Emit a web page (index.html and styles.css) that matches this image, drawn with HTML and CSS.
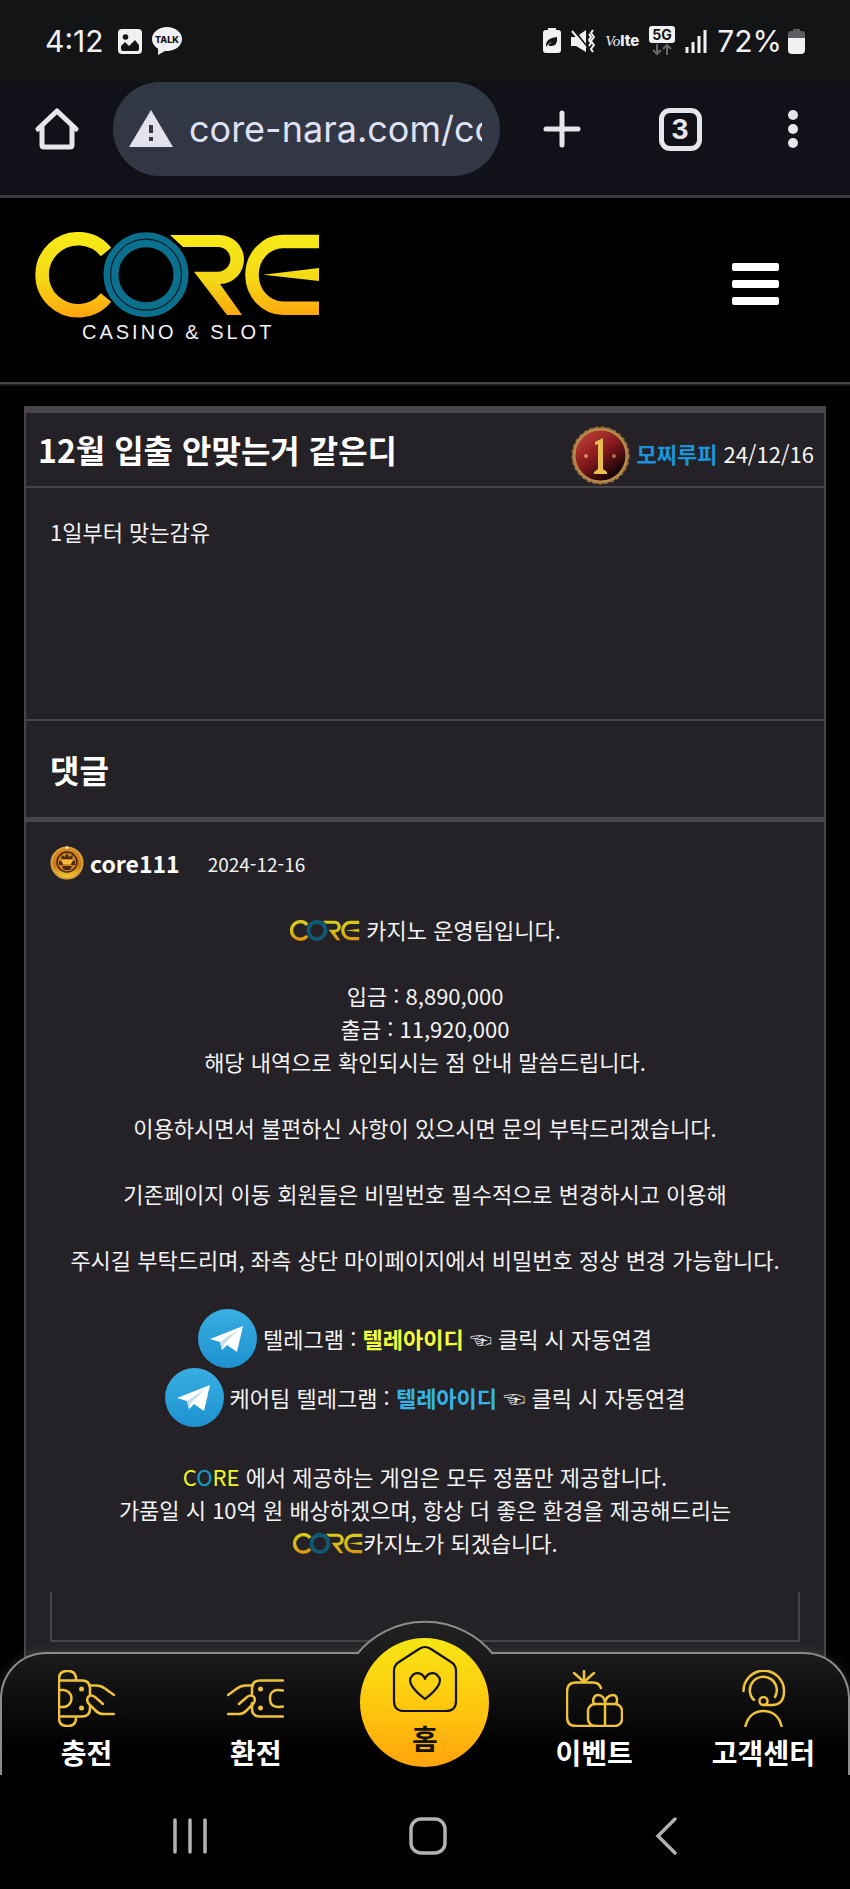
FILE: index.html
```html
<!DOCTYPE html>
<html lang="ko">
<head>
  <meta charset="UTF-8">
  <meta name="viewport" content="width=device-width, initial-scale=1.0">
  <title>CORE 게시판</title>
  <link rel="stylesheet" href="styles.css">
</head>
<body>

  <!-- shared shapes -->
  <svg class="defs" width="0" height="0" aria-hidden="true">
    <defs>
      <linearGradient id="gold" gradientUnits="userSpaceOnUse" x1="0" y1="0" x2="0" y2="84">
        <stop offset="0" stop-color="#f8ea18"/>
        <stop offset="0.55" stop-color="#f4d916"/>
        <stop offset="1" stop-color="#ffa50f"/>
      </linearGradient>
      <linearGradient id="sky" x1="0" y1="0" x2="0" y2="1">
        <stop offset="0" stop-color="#38aee2"/>
        <stop offset="1" stop-color="#1e92d0"/>
      </linearGradient>
      <linearGradient id="ruby" x1="0.2" y1="0.1" x2="0.75" y2="0.85">
        <stop offset="0" stop-color="#b83a33"/>
        <stop offset="0.5" stop-color="#84181b"/>
        <stop offset="1" stop-color="#160508"/>
      </linearGradient>
      <linearGradient id="coin" x1="0" y1="0" x2="0" y2="1">
        <stop offset="0" stop-color="#d98a25"/>
        <stop offset="0.6" stop-color="#c97a1c"/>
        <stop offset="1" stop-color="#f4d63c"/>
      </linearGradient>
      <symbol id="brand" viewBox="0 -1 284 86">
        <g fill="none" stroke="url(#gold)" stroke-width="13.5">
          <path d="M71 19A36 36 0 1 0 71 64.500"/>
          <path d="M284 8.500H248A31 33.300 0 0 0 248 75.200H284"/>
        </g>
        <path fill="url(#gold)" d="M135 2H184A24.500 24.500 0 0 1 185 51L207 82H192L159 38.700H183A12.300 12.300 0 0 0 183 14H148z"/>
        <path fill="url(#gold)" d="M228 41.700L284 35V48z"/>
        <circle cx="111" cy="41.700" r="35" fill="none" stroke="#0b6f8e" stroke-width="15"/>
        <circle cx="111" cy="41.700" r="35.500" fill="none" stroke="#041a24" stroke-width="1.200"/>
      </symbol>
      <symbol id="telegram" viewBox="0 0 59 59">
        <circle cx="29.500" cy="29.500" r="29.500" fill="url(#sky)"/>
        <path fill="#fff" d="M12 30L45 17L39 43L29 36L24 41L22 33z"/>
        <path fill="#c5dcec" d="M22 33L40 21L26 35L24 41z"/>
      </symbol>
    </defs>
  </svg>

  <!-- phone status bar -->
  <div class="status">
    <span class="status-text">4:12</span>
    <svg class="s-photo" width="24" height="25" viewBox="0 0 24 25">
      <rect width="24" height="25" rx="4" fill="#f1f1f3"/>
      <circle cx="7.500" cy="8" r="2.800" fill="#131416"/>
      <path fill="#131416" d="M3 19V17L7 13L11 17L17 11L21 16V20Q21 22 19 22H5Q3 22 3 19z"/>
    </svg>
    <svg class="s-talk" width="30" height="28" viewBox="0 0 30 28">
      <path fill="#f1f1f3" d="M15 0C23 0 30 5 30 12S23 24 15 24L13 24L6 28V21.500Q0 18 0 12C0 5 7 0 15 0z"/>
      <text x="15" y="16" text-anchor="middle" font-family="Inter, sans-serif" font-size="9" font-weight="800" fill="#131416">TALK</text>
    </svg>
    <div class="status-right">
      <svg width="18" height="26" viewBox="0 0 18 26">
        <path fill="#f1f1f3" d="M5 0H13V2H15Q18 2 18 5V22Q18 25 15 25H3Q0 25 0 22V5Q0 2 3 2H5z"/>
        <path fill="#131416" d="M3 19Q2 10 14 9Q15 18 8 18Q6 18 5 17L9 14Q5 15 3 19z"/>
      </svg>
      <svg width="24" height="24" viewBox="0 0 24 24">
        <path fill="#f1f1f3" d="M0 8H5L15 1V23L5 17H0z"/>
        <path stroke="#131416" stroke-width="2" d="M3 1L17 19"/>
        <path stroke="#f1f1f3" stroke-width="2" d="M1 2L15 19"/>
        <path fill="none" stroke="#f1f1f3" stroke-width="2" d="M18 5L20 8L18 11L20 14L18 17M22 1L20 4L23 8L20 12L23 16L20 20L22 23"/>
      </svg>
      <span class="volte"><i>Vo</i>lte</span>
      <svg width="26" height="30" viewBox="0 0 26 30">
        <rect width="26" height="17" rx="3" fill="#f1f1f3"/>
        <text x="13" y="14" text-anchor="middle" font-family="Inter, sans-serif" font-size="14" font-weight="700" fill="#131416">5G</text>
        <path fill="none" stroke="#66676b" stroke-width="2" d="M8 18V28M4 24L8 28L12 24M18 29V19M14 23L18 19L22 23"/>
      </svg>
      <svg width="22" height="24" viewBox="0 0 22 24">
        <path stroke="#f1f1f3" stroke-width="3" d="M2 18V24M8 13V24M14 7V24"/>
        <path stroke="#f1f1f3" stroke-width="3" d="M20 1V24"/>
      </svg>
      <span class="status-text">72%</span>
      <svg class="s-battery" width="17" height="25" viewBox="0 0 17 25">
        <path fill="#5d5e61" d="M5 0H12V2H14Q17 2 17 5V10H0V5Q0 2 3 2H5z"/>
        <path fill="#f1f1f3" d="M0 9H17V21Q17 25 13 25H4Q0 25 0 21z"/>
      </svg>
    </div>
  </div>

  <!-- browser bar -->
  <div class="browser">
    <button class="browser-btn" aria-label="Home">
      <svg width="44" height="44" viewBox="0 0 44 44" fill="none" stroke="#e6e5ea" stroke-width="5" stroke-linejoin="round" stroke-linecap="round">
        <path d="M3 22L22 4L41 22"/>
        <path d="M7 19V38Q7 40 9 40H35Q37 40 37 38V19"/>
      </svg>
    </button>
    <div class="address">
      <svg width="44" height="38" viewBox="0 0 44 38">
        <path fill="#e2e2ee" d="M22 0L44 37H0z"/>
        <path fill="#333745" d="M20 15H24V23H20zM20 27H24V31H20z"/>
      </svg>
      <input type="text" value="core-nara.com/cc" aria-label="Address">
    </div>
    <button class="browser-btn" aria-label="New tab">
      <svg width="38" height="38" viewBox="0 0 38 38" stroke="#e6e5ea" stroke-width="5" stroke-linecap="round">
        <path d="M19 3V35M3 19H35"/>
      </svg>
    </button>
    <button class="browser-btn" aria-label="Tabs"><span class="tab-count">3</span></button>
    <button class="browser-btn" aria-label="Menu">
      <svg width="10" height="38" viewBox="0 0 10 38" fill="#e6e5ea">
        <circle cx="5" cy="5" r="5"/><circle cx="5" cy="19" r="5"/><circle cx="5" cy="33" r="5"/>
      </svg>
    </button>
  </div>

  <div class="site">
    <header>
      <a class="logo" href="/" aria-label="CORE">
        <svg width="284" height="86"><use href="#brand"/></svg>
        <span>CASINO &amp; SLOT</span>
      </a>
      <button class="menu" aria-label="Menu"><i></i><i></i><i></i></button>
    </header>

    <main class="board">
      <div class="post-head">
        <h1>12월 입출 안맞는거 같은디</h1>
        <div class="post-info">
          <svg class="medal" width="59" height="59" viewBox="0 0 59 59">
            <circle cx="29.500" cy="29.500" r="26.500" fill="url(#ruby)" stroke="#b98a4a" stroke-width="3"/>
            <circle cx="29.500" cy="29.500" r="28" fill="none" stroke="#9a7440" stroke-width="2" stroke-dasharray="4 2"/>
            <path fill="#e9be4e" d="M24 16L32 12V43L36 46V48H23V46L27 43V18L24 19z"/>
            <circle cx="15" cy="30" r="2" fill="#d98a5a"/>
            <circle cx="43" cy="30" r="2" fill="#a8763a"/>
          </svg>
          <strong>모찌루피</strong>
          <span>24/12/16</span>
        </div>
      </div>

      <div class="post-body">1일부터 맞는감유</div>

      <h2>댓글</h2>

      <!-- comment -->
      <div class="comment">
        <div class="comment-info">
          <svg width="34" height="34" viewBox="0 0 34 34">
            <circle cx="17" cy="17" r="15.500" fill="url(#coin)" stroke="#d9a03a" stroke-width="2"/>
            <circle cx="17" cy="1.500" r="1.500" fill="#f0dc9a"/>
            <circle cx="17" cy="16" r="10" fill="#c98420" stroke="#4a270c" stroke-width="1.500"/>
            <path fill="#4a270c" d="M11 9L15 11L17 7L19 11L23 9L22 13H12zM9 15H13V19H9zM21 15H25V19H21zM12 20H22L20 24H14z"/>
            <path fill="#f0bd3c" d="M11 14H23L21 18H13z"/>
          </svg>
          <strong>core111</strong>
          <span>2024-12-16</span>
        </div>

        <div class="comment-text">
          <p><svg class="brand-sm" width="71" height="21"><use href="#brand"/></svg> 카지노 운영팀입니다.</p>
          <p>입금 : 8,890,000<br>
            출금 : 11,920,000<br>
            해당 내역으로 확인되시는 점 안내 말씀드립니다.</p>
          <p>이용하시면서 불편하신 사항이 있으시면 문의 부탁드리겠습니다.</p>
          <p>기존페이지 이동 회원들은 비밀번호 필수적으로 변경하시고 이용해</p>
          <p>주시길 부탁드리며, 좌측 상단 마이페이지에서 비밀번호 정상 변경 가능합니다.</p>
          <div class="contacts">
            <div class="contact">
              <svg width="59" height="59"><use href="#telegram"/></svg>
              <span>텔레그램 : <a class="yellow" href="#">텔레아이디</a> ☜ 클릭 시 자동연결</span>
            </div>
            <div class="contact">
              <svg width="59" height="59"><use href="#telegram"/></svg>
              <span>케어팀 텔레그램 : <a class="blue" href="#">텔레아이디</a> ☜ 클릭 시 자동연결</span>
            </div>
          </div>
          <p><span class="c-yellow">C</span><span class="c-blue">O</span><span class="c-yellow">RE</span> 에서 제공하는 게임은 모두 정품만 제공합니다.<br>
            가품일 시 10억 원 배상하겠으며, 항상 더 좋은 환경을 제공해드리는<br>
            <svg class="brand-sm" width="71" height="21"><use href="#brand"/></svg>카지노가 되겠습니다.</p>
        </div>
        <div class="comment-end"></div>
      </div>
    </main>

    <!-- bottom tabs -->
    <nav class="tabs">
      <svg class="hump" width="136" height="36" viewBox="0 0 136 36">
        <defs>
          <linearGradient id="humpFill" x1="0" y1="0" x2="0" y2="1">
            <stop offset="0" stop-color="#232223"/>
            <stop offset="1" stop-color="#1b1b1b"/>
          </linearGradient>
        </defs>
        <path fill="url(#humpFill)" d="M0 36V33A88 88 0 0 1 136 33V36z"/>
        <path fill="none" stroke="#8d8d8b" stroke-width="2" d="M0 34A88 88 0 0 1 136 34"/>
      </svg>
      <a href="#">
        <svg width="57" height="57" viewBox="0 0 57 57" class="line">
          <path d="M18 10V9Q18 1 10 1H9Q1 1 1 9V48Q1 56 9 56H10Q18 56 18 48V47"/>
          <path d="M1 10.500H24Q32 10.500 32 18.500V38.500Q32 46.500 24 46.500H1"/>
          <path d="M1 20H5A8.500 8.500 0 0 1 5 37H1"/>
          <path d="M31 15.500H38Q43 15.500 47 18.500L56 25"/>
          <path class="mask" d="M45 34L37 27Q33 24 30 27Q28 31 31 34L38 41"/>
          <path d="M38 41Q41 44 45 44H56"/>
          <circle class="dot" cx="23.500" cy="19" r="2.500"/><circle class="dot" cx="23.500" cy="38" r="2.500"/>
        </svg>
        <span>충전</span>
      </a>
      <a href="#">
        <svg width="57" height="57" viewBox="0 0 57 57" class="line">
          <path d="M56 10.500H33Q25 10.500 25 18.500V24M25 33V38.500Q25 46.500 33 46.500H56"/>
          <path d="M56 20.500Q43 18 43 28.500T56 36.500"/>
          <path d="M26 15.500H19Q14 15.500 10 18.500L1 25"/>
          <path d="M12 34L20 27Q24 24 27 27Q29 31 26 34L19 41Q16 44 12 44H1"/>
          <circle class="dot" cx="33.500" cy="19" r="2.500"/><circle class="dot" cx="33.500" cy="38" r="2.500"/>
        </svg>
        <span>환전</span>
      </a>
      <a href="#" class="home">
        <svg width="66" height="68" viewBox="0 0 66 68" fill="none" stroke="#15120a" stroke-width="2.200" stroke-linejoin="round">
          <path d="M2 26Q2 20 7 17L27 4Q33 0 39 4L59 17Q64 20 64 26V56Q64 66 54 66H12Q2 66 2 56z"/>
          <path d="M33 54C20 44 15 36 20 31C24 26 31 28 33 34C35 28 42 26 46 31C51 36 46 44 33 54z"/>
        </svg>
        <span>홈</span>
      </a>
      <a href="#">
        <svg width="57" height="57" viewBox="0 0 57 57" class="line">
          <path d="M18 12V1M17 11L8 3M19 11L28 3"/>
          <path d="M35 18Q33 12.500 27 12.500H10Q1 12.500 1 21.500V47Q1 56 10 56H30"/>
          <rect x="22" y="34" width="34" height="22" rx="7"/>
          <path d="M39 56V34C39 28 36 25 32 25S26 30 28 34M39 34C39 28 43 25 47 25S52 30 50 34"/>
        </svg>
        <span>이벤트</span>
      </a>
      <a href="#">
        <svg width="57" height="57" viewBox="0 0 57 57" class="line">
          <path d="M8.500 21A20 20 0 0 1 49 21Q49 35 37 35H30"/>
          <path d="M19 30A13.500 13.500 0 1 1 40 27"/>
          <circle cx="28.500" cy="31" r="4"/>
          <path d="M10.500 56C13 46 20 41 28.500 41S44 46 46.500 56"/>
        </svg>
        <span>고객센터</span>
      </a>
    </nav>
  </div>

  <!-- android buttons -->
  <div class="sysnav">
    <button aria-label="Recent">
      <svg width="34" height="38" viewBox="0 0 34 38" stroke="#b3b1b3" stroke-width="3.500" stroke-linecap="round">
        <path d="M2 3V35M17 3V35M32 3V35"/>
      </svg>
    </button>
    <button aria-label="Home">
      <svg width="38" height="38" viewBox="0 0 38 38" fill="none" stroke="#b3b1b3" stroke-width="3.500">
        <rect x="2" y="2" width="34" height="34" rx="10"/>
      </svg>
    </button>
    <button aria-label="Back">
      <svg width="22" height="38" viewBox="0 0 22 38" fill="none" stroke="#b3b1b3" stroke-width="3.500" stroke-linecap="round">
        <path d="M20 2L3 19L20 36"/>
      </svg>
    </button>
  </div>

</body>
</html>
```

FILE: styles.css
```css
* {
  box-sizing: border-box;
}

body {
  margin: 0;
  min-height: 100vh;
  display: flex;
  flex-direction: column;
  background-color: #000;
  color: #f3f2f4;
  font-family: "Noto Sans CJK KR", "DejaVu Sans", sans-serif;
  font-size: 22px;
  line-height: 33px;
}

svg {
  display: block;
  flex: none;
}

.defs {
  position: absolute;
}

button {
  background: none;
  border: none;
  padding: 0;
  cursor: pointer;
}

a {
  color: inherit;
  text-decoration: none;
}

/* status bar */
.status {
  display: flex;
  align-items: center;
  height: 82px;
  padding: 0 45px;
  background-color: #131416;
}

.status-text {
  font-family: Inter, sans-serif;
  font-size: 30px;
  color: #f1f1f3;
}

.s-photo {
  margin-left: 14px;
}

.s-talk {
  margin-left: 10px;
}

.status-right {
  display: flex;
  align-items: center;
  gap: 10px;
  margin-left: auto;
}

.volte {
  font-family: Inter, sans-serif;
  font-size: 15px;
  font-weight: 800;
  color: #f1f1f3;
}

.volte i {
  font-family: "Liberation Serif", serif;
  font-weight: 400;
}

.s-battery {
  margin-left: -4px;
}

/* browser bar */
.browser {
  display: grid;
  grid-template-columns: 113px minmax(0, 1fr) 124px 112px 114px;
  align-items: center;
  padding-bottom: 19px;
  background-color: #111219;
  border-bottom: 3px solid #3b3a3f;
}

.browser-btn {
  display: flex;
  justify-content: center;
}

.address {
  display: flex;
  align-items: center;
  gap: 16px;
  height: 94px;
  padding: 0 18px 0 16px;
  border-radius: 47px;
  background: linear-gradient(#303943, #333745 50%);
}

.address input {
  flex: 1;
  min-width: 0;
  padding: 0;
  border: none;
  outline: none;
  background: none;
  color: #dfe0f2;
  font-family: Inter, sans-serif;
  font-size: 36px;
}

.tab-count {
  width: 43px;
  height: 43px;
  border: 5px solid #e6e5ea;
  border-radius: 11px;
  color: #e6e5ea;
  font-family: Inter, sans-serif;
  font-size: 27px;
  font-weight: 700;
  line-height: 33px;
}

/* site */
.site {
  position: relative;
  flex: 1;
  display: flex;
  flex-direction: column;
  overflow: hidden;
}

header {
  display: flex;
  align-items: center;
  justify-content: space-between;
  padding: 34px 71px 39px 35px;
  border-bottom: 2px solid #474549;
  box-shadow: 0 2px 0 #1d1c1f;
}

.logo span {
  display: block;
  margin-top: 3px;
  padding-left: 47px;
  font-family: "Liberation Sans", sans-serif;
  font-size: 20px;
  line-height: 22px;
  letter-spacing: 3px;
}

.menu {
  display: flex;
  flex-direction: column;
  gap: 9px;
  margin-bottom: 8px;
}

.menu i {
  width: 47px;
  height: 8px;
  border-radius: 2px;
  background-color: #fff;
}

.board {
  flex: 1;
  margin: 22px 24px 0;
  padding-bottom: 130px;
  background-color: #242226;
  border: 2px solid #474549;
  border-top-width: 7px;
  border-bottom: none;
}

.post-head {
  display: flex;
  align-items: center;
  justify-content: space-between;
  height: 75px;
  padding: 0 10px 2px 12px;
  border-bottom: 2px solid #474549;
}

h1,
h2 {
  margin: 0;
  font-size: 32px;
  line-height: 48px;
  color: #fff;
}

.post-info {
  display: flex;
  align-items: center;
  gap: 6px;
  margin-top: 10px;
}

.post-info strong {
  color: #1c94dc;
}

.medal {
  margin-top: 4px;
}

.post-body {
  min-height: 231px;
  padding: 27px 24px;
}

h2 {
  padding: 24px;
  border-top: 2px solid #474549;
  border-bottom: 5px solid #474549;
}

.comment {
  padding: 24px 24px 0;
}

.comment-info {
  display: flex;
  align-items: center;
  gap: 6px;
}

.comment-info strong {
  font-size: 23px;
  line-height: 30px;
  color: #fff;
}

.comment-info span {
  margin-left: 22px;
  font-size: 19px;
}

.comment-text {
  margin-top: 33px;
  text-align: center;
}

.comment-text p {
  margin: 0 0 33px;
}

.brand-sm {
  display: inline-block;
  vertical-align: -2px;
  opacity: 0.85;
}

.contacts {
  margin: 0 0 33px;
}

.contact {
  display: flex;
  align-items: center;
  justify-content: center;
  gap: 6px;
}

.contact a {
  font-weight: 700;
}

.yellow {
  color: #f5ff3c;
}

.blue {
  color: #35b4e8;
}

.c-yellow {
  color: #f2fa1e;
}

.c-blue {
  color: #129dc4;
}

.comment-end {
  height: 50px;
  border: 2px solid #474549;
  border-top: none;
}

/* bottom tabs */
.tabs {
  position: absolute;
  left: 0;
  right: 0;
  bottom: 0;
  display: grid;
  grid-template-columns: repeat(5, 1fr);
  height: 123px;
  border: 2px solid #8d8d8b;
  border-bottom: none;
  border-radius: 46px 46px 0 0;
  background: linear-gradient(#1b1b1b, #000 80%);
  box-shadow: 0 0 12px rgba(120, 120, 110, 0.3);
}

.hump {
  position: absolute;
  left: 50%;
  top: -34px;
  margin-left: -68px;
}

.tabs a {
  display: flex;
  flex-direction: column;
  align-items: center;
  padding-top: 16px;
  color: #fff;
  font-size: 28px;
  font-weight: 700;
  line-height: 40px;
}

.tabs a span {
  margin-top: 5px;
}

.line {
  fill: none;
  stroke: #f0c23a;
  stroke-width: 2.5;
  stroke-linecap: round;
}

.line .dot {
  fill: #f0c23a;
  stroke: none;
}

.line .mask {
  fill: #121212;
}

.tabs .home {
  position: relative;
  justify-self: center;
  width: 129px;
  height: 129px;
  margin-top: -16px;
  padding-top: 7px;
  border-radius: 50%;
  background: linear-gradient(#f5e614, #ffc60e 55%, #ffa30c);
  color: #15120a;
}

/* android buttons */
.sysnav {
  display: grid;
  grid-template-columns: repeat(3, 1fr);
  height: 114px;
  padding: 7px 65px 0 71px;
}

.sysnav button {
  display: flex;
  align-items: center;
  justify-content: center;
}
```
